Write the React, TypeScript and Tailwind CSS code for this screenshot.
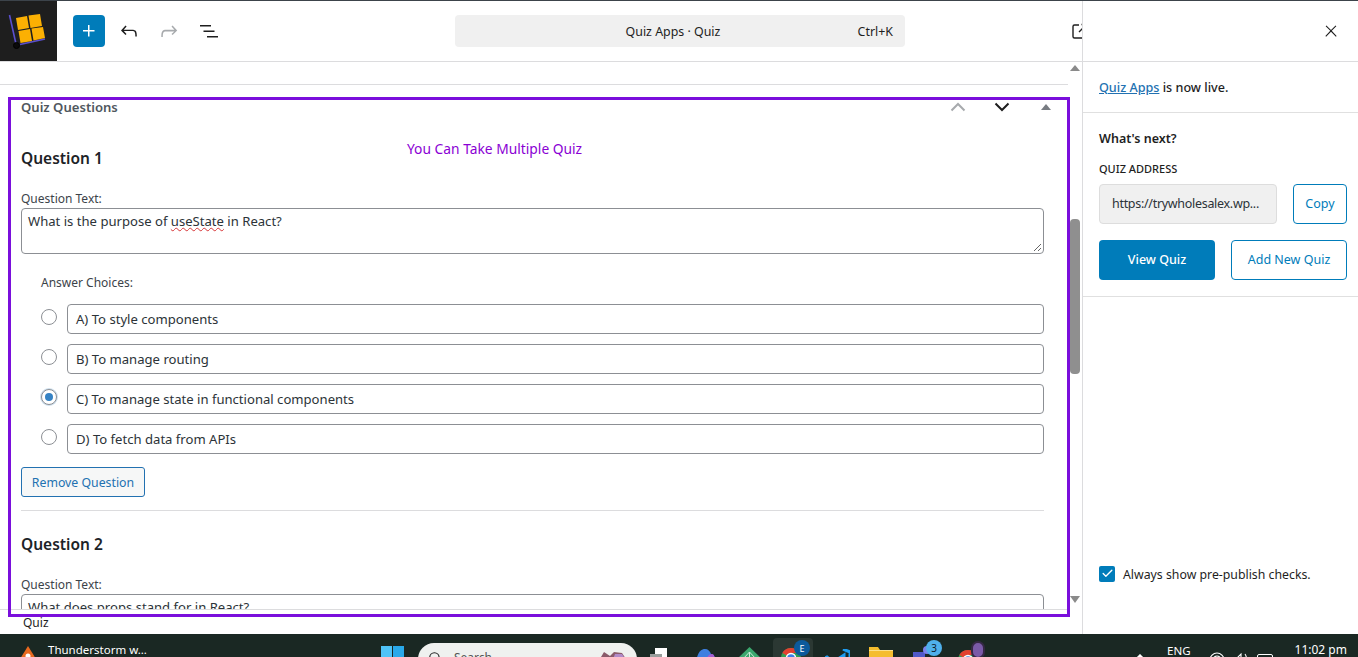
import React from "react";
import { Check, Search } from "lucide-react";

const choices = [
  { label: "A) To style components", checked: false },
  { label: "B) To manage routing", checked: false },
  { label: "C) To manage state in functional components", checked: true },
  { label: "D) To fetch data from APIs", checked: false },
];

const WpIcon = ({ d, className, size = 24 }: { d: string; className?: string; size?: number }) => (
  <svg width={size} height={size} viewBox="0 0 24 24" fill="currentColor" className={className}>
    <path d={d} />
  </svg>
);

const Radio = ({ checked }: { checked: boolean }) => (
  <span
    className={
      checked
        ? "w-4 h-4 rounded-full border border-[#8c8f94] bg-white flex items-center justify-center shrink-0 ring-1 ring-[#cfe0ee]"
        : "w-4 h-4 rounded-full border border-[#8c8f94] bg-white flex items-center justify-center shrink-0"
    }
  >
    {checked && <span className="w-2 h-2 rounded-full bg-[#3582c4]" />}
  </span>
);

const Logo = () => (
  <svg width="57" height="60" viewBox="0 0 57 60">
    <path d="M9.5 14L16 43" stroke="#5a4fcf" strokeWidth="1.6" fill="none" />
    <path d="M20 43.5L45 38" stroke="#5a4fcf" strokeWidth="1.6" fill="none" />
    <circle cx="16.5" cy="44.5" r="3" fill="#0a0a0a" stroke="#000" />
    <path
      d="M16 17l11-2 2 12-11 2z M28.5 14.5L40 13l2 12-11.500 2z M18.500 30L30 28l2 12-11.500 2z M31.500 27.500L43 26l2 11-11.500 2.500z"
      fill="#fbb003"
    />
  </svg>
);

const Chrome = () => (
  <svg width="20" height="20" viewBox="0 0 20 20">
    <circle cx="10" cy="10" r="10" fill="#2f9e52" />
    <path d="M10 0a10 10 0 0 1 8.700 5H10a5 5 0 0 0-4.400 2.600L1.300 5A10 10 0 0 1 10 0z" fill="#e2402f" />
    <circle cx="10" cy="10" r="4.500" fill="#3a7fe8" stroke="#fff" strokeWidth="1.500" />
  </svg>
);

const App: React.FC = () => {
  return (
    <div className="relative w-[1358px] h-[657px] flex flex-col bg-white overflow-hidden text-[13.1px] text-[#2c3338] font-['Noto_Sans',sans-serif]">
      <div className="flex-1 min-h-0 flex border-t border-[#3c434a]">
        <div className="flex-1 min-w-0 flex flex-col">
          {/* top toolbar */}
          <div className="h-[61px] shrink-0 flex items-center border-b border-[#dcdcde]">
            <div className="w-[57px] h-[60px] bg-[#1e1e1e]">
              <Logo />
            </div>
            <button className="ml-4 w-8 h-8 rounded-sm bg-[#007cba] flex items-center justify-center text-white">
              <WpIcon d="M11 12.500V17.500H12.500V12.500H17.500V11H12.500V6H11V11H6V12.500H11Z" />
            </button>
            <WpIcon
              className="ml-3 text-[#1e1e1e]"
              d="M18.300 11.700c-.6-.6-1.400-.9-2.300-.9H6.700l2.900-3.300-1.100-1-4.500 5L8.500 16l1-1-2.700-3H16c.5 0 .9.2 1.300.5 1 1 1 3.400 1 4.500v.5h1.500v-.5c0-1.500 0-4.300-1.500-5.800z"
            />
            <WpIcon
              className="ml-4 text-[#a7aaad]"
              d="M15.600 6.500l-1.100 1 2.900 3.300H8c-.9 0-1.700.3-2.300.9-1.400 1.500-1.400 4.200-1.400 5.800v.5h1.500v-.5c0-1 0-3.500 1-4.500.3-.3.7-.5 1.300-.5h9.200L14.500 15l1.100 1.100 4.600-4.600-4.600-5z"
            />
            <WpIcon
              className="ml-4 text-[#1e1e1e]"
              d="M3 6h11v1.500H3V6zm3.500 5.500h11V13h-11v-1.500zM21 17H10v1.500h11V17z"
            />
            <div className="ml-[234px] w-[450px] h-8 rounded bg-[#f0f0f0] flex items-center relative text-[12.4px] text-[#1e1e1e] pr-[14px] pt-[2px]">
              <span className="w-full text-center">Quiz Apps · Quiz</span>
              <span className="absolute right-[12px]">Ctrl+K</span>
            </div>
            <div className="ml-auto w-[10px] h-[16px] overflow-hidden">
              <svg width="16" height="16" viewBox="0 0 16 16" fill="none" stroke="#1e1e1e" strokeWidth="1.400">
                <path d="M7 2H2.500A1.500 1.500 0 0 0 1 3.500v10A1.500 1.500 0 0 0 2.500 15h9a1.500 1.500 0 0 0 1.500-1.500V9M7 9l7-7M9.500 1.500H15V7" />
              </svg>
            </div>
          </div>
          {/* editor area */}
          <div className="flex-1 min-h-0 flex">
            <div className="flex-1 min-w-0 flex flex-col">
              <div className="h-[23px] shrink-0 border-b border-[#dcdcde]" />
              <div className="flex-1 min-h-0 overflow-hidden relative pl-[21px] pr-[24px]">
                <div className="h-[37px] flex items-start justify-between font-semibold text-[#50575e]">
                  <span className="mt-[13px] leading-[18px]">Quiz Questions</span>
                  <div className="flex -mr-[24px] mt-[17px]">
                    <span className="w-[44px] flex justify-center">
                      <svg width="16" height="10" viewBox="0 0 16 10" fill="none" stroke="#a7aaad" strokeWidth="2">
                        <path d="M1.500 8.500L8 2l6.500 6.500" />
                      </svg>
                    </span>
                    <span className="w-[44px] flex justify-center">
                      <svg width="16" height="10" viewBox="0 0 16 10" fill="none" stroke="#1e1e1e" strokeWidth="2">
                        <path d="M1.500 1.500L8 8l6.500-6.500" />
                      </svg>
                    </span>
                    <span className="w-[44px] flex justify-center pt-[2px]">
                      <span className="w-0 h-0 border-x-[5px] border-x-transparent border-b-[6px] border-b-[#787c82]" />
                    </span>
                  </div>
                </div>
                <div className="h-6" />
                <h3 className="text-[15.5px] leading-6 font-semibold text-[#1d2327]">Question 1</h3>
                <div className="mt-[21px] text-[12px] leading-4 text-[#3c434a]">Question Text:</div>
                <div className="mt-[1px] h-[46px] border border-[#8c8f94] rounded px-[6px] py-[3px] relative">
                  What is the purpose of{" "}
                  <span className="underline decoration-wavy decoration-[#d63638] decoration-1">useState</span> in React?
                  <svg width="9" height="9" viewBox="0 0 9 9" className="absolute right-[1px] bottom-[1px]">
                    <path d="M1 8l7-7M5 8l3-3" stroke="#666" strokeWidth="1" />
                  </svg>
                </div>
                <div className="mt-[21px] ml-5 text-[12px] leading-4 text-[#3c434a]">Answer Choices:</div>
                <div className="mt-[13px] ml-5 flex flex-col gap-[10px]">
                  {choices.map((c) => (
                    <div key={c.label} className="flex items-center gap-[10px]">
                      <div className="-mt-[4px]">
                        <Radio checked={c.checked} />
                      </div>
                      <div className="flex-1 h-[30px] border border-[#8c8f94] rounded px-2 pt-[2px] flex items-center">{c.label}</div>
                    </div>
                  ))}
                </div>
                <button className="mt-[13px] h-[30px] w-[124px] border border-[#2271b1] rounded-[3px] bg-[#f6f7f7] text-[#2271b1] text-[12.3px] pt-[2px] flex items-center justify-center">
                  Remove Question
                </button>
                <div className="mt-[13px] border-t border-[#dcdcde]" />
                <h3 className="mt-[21px] text-[15.5px] leading-6 font-semibold text-[#1d2327]">Question 2</h3>
                <div className="mt-[21px] text-[12px] leading-4 text-[#3c434a]">Question Text:</div>
                <div className="mt-[1px] h-[46px] border border-[#8c8f94] rounded px-[6px] py-[3px]">What does props stand for in React?</div>
                {/* purple annotation */}
                <span className="absolute left-[407px] top-[54px] text-[13.800px] text-[#8a00d4]">You Can Take Multiple Quiz</span>
              </div>
              <div className="h-[25px] shrink-0 border-t border-[#dcdcde] pl-[23px] pt-[2px] flex items-center text-[12px] text-[#1e1e1e]">Quiz</div>
            </div>
            {/* page scrollbar */}
            <div className="w-[14px] shrink-0 flex flex-col items-center">
              <span className="mt-[3px] w-0 h-0 border-x-[5px] border-x-transparent border-b-[6px] border-b-[#8a8a8a]" />
              <span className="mt-[148px] w-[10px] h-[155px] rounded bg-[#8f8f8f]" />
              <span className="mt-[222px] w-0 h-0 border-x-[5px] border-x-transparent border-t-[7px] border-t-[#8a8a8a]" />
            </div>
          </div>
        </div>
        {/* publish sidebar */}
        <aside className="w-[276px] shrink-0 border-l border-[#dcdcde] flex flex-col text-[#1e1e1e]">
          <div className="h-[61px] shrink-0 border-b border-[#dcdcde] flex items-center justify-end pr-[18px]">
            <WpIcon size={18} d="M13 11.800l6.100-6.300-1-1-6.100 6.200-6.100-6.200-1 1 6.100 6.300-6.500 6.700 1 1 6.500-6.600 6.500 6.600 1-1z" />
          </div>
          <div className="h-[51px] shrink-0 border-b border-[#e0e0e0] pl-4 pt-[2px] flex items-center font-medium text-[12.600px]">
            <span>
              <a className="text-[#2271b1] underline">Quiz Apps</a> is now live.
            </span>
          </div>
          <div className="h-[184px] shrink-0 border-b border-[#e0e0e0] px-4 pt-[16px]">
            <div className="font-semibold leading-5 text-[12.500px]">What's next?</div>
            <div className="mt-[12px] text-[11px] leading-4 font-medium">QUIZ ADDRESS</div>
            <div className="mt-[7px] flex justify-between w-[248px]">
              <div className="w-[178px] h-10 rounded-sm border border-[#ddd] bg-[#f0f0f0] flex items-center pl-3 text-[#2c3338] text-[12.500px] tracking-[-0.3px]">
                https://trywholesalex.wp...
              </div>
              <button className="w-[54px] h-10 rounded-sm border border-[#007cba] text-[#007cba] bg-white text-[12.500px]">Copy</button>
            </div>
            <div className="mt-4 flex justify-between w-[248px]">
              <button className="w-[116px] h-10 rounded-sm bg-[#007cba] text-white font-medium text-[12.500px]">View Quiz</button>
              <button className="w-[116px] h-10 rounded-sm border border-[#007cba] text-[#007cba] bg-white text-[12.500px]">Add New Quiz</button>
            </div>
          </div>
          <div className="flex-1 flex items-end pl-4 pb-[50px]">
            <span className="flex items-center gap-2 text-[12.300px]">
              <span className="w-4 h-4 rounded-[2px] bg-[#007cba] flex items-center justify-center text-white">
                <Check size={13} strokeWidth={2.500} />
              </span>
              <span className="pt-[2px]">Always show pre-publish checks.</span>
            </span>
          </div>
        </aside>
      </div>
      {/* windows taskbar, cut off at the bottom like the screenshot */}
      <div className="h-[23px] shrink-0 bg-[#1a2823] flex items-start text-white overflow-hidden pl-5">
        <svg width="16" height="13" viewBox="0 0 16 13" className="mt-3 shrink-0">
          <path d="M8 0L16 13H0z" fill="#e8691f" />
          <circle cx="8" cy="10" r="2.500" fill="#fff" />
        </svg>
        <span className="ml-3 w-[333px] shrink-0 mt-[8px] leading-4 text-[11.500px] whitespace-nowrap">Thunderstorm w...</span>
        <div className="mt-3 w-[23px] h-[23px] grid grid-cols-2 gap-[1px] shrink-0">
          <span className="bg-[#4fc3f7]" />
          <span className="bg-[#29a9ea]" />
        </div>
        <div className="ml-[14px] mt-[9px] w-[219px] h-[32px] shrink-0 rounded-full bg-[#eff1ef] flex items-start pl-[10px] pt-[8px] text-[#555] relative">
          <Search size={14} className="text-[#222]" />
          <span className="ml-3 leading-3 text-[12px] mt-[1px]">Search</span>
          <svg width="34" height="12" viewBox="0 0 34 12" className="absolute left-[178px] top-[7px]">
            <path d="M2 12L8 2l6 4 4-4 8 1 6 9z" fill="#8a5a6a" />
            <path d="M16 12l3-8 7 0 5 8z" fill="#b18ac9" />
          </svg>
        </div>
        <span className="ml-[18px] mt-[14px] w-3 h-3 bg-white shrink-0 relative">
          <span className="absolute -left-[5px] top-[6px] w-3 h-3 bg-[#9a9f9d]" />
        </span>
        <svg width="21" height="12" viewBox="0 0 21 12" className="ml-7 mt-[15px] shrink-0">
          <path d="M1 12C3 3 6 0 10 0c3 0 5 2 6 5 3 0 4 3 4 7z" fill="#3d7fe0" />
          <path d="M11 12c1-5 3-7 6-7 2 0 3 3 3 7z" fill="#a45cd0" />
        </svg>
        <svg width="25" height="12" viewBox="0 0 25 12" className="ml-[21px] mt-[13px] shrink-0">
          <path d="M12.500 0L25 12H0z" fill="#3aa76d" />
          <path d="M12.500 5L6 12M12.500 5L19 12M12.500 5v7" stroke="#cdebd9" strokeWidth="1" />
        </svg>
        <div className="ml-[11px] mt-[4px] w-[40px] h-[30px] rounded bg-[#2b3833] shrink-0 relative pl-2 pt-[10px]">
          <Chrome />
          <span className="absolute left-[21px] top-[2px] w-4 h-4 rounded-full bg-[#0c5a9c] flex items-center justify-center text-[9px] leading-none">E</span>
        </div>
        <svg width="25" height="12" viewBox="0 0 25 12" className="ml-3 mt-[15px] shrink-0">
          <path d="M18 0l7 3v9h-6V6L10 12H7L2 8 0 9v3" fill="none" stroke="#1f9cf0" strokeWidth="3" />
        </svg>
        <svg width="24" height="12" viewBox="0 0 24 12" className="ml-[19px] mt-[13px] shrink-0">
          <path d="M0 0h9l2 3h13v9H0z" fill="#f5bd2e" />
          <path d="M0 3.500h24" stroke="#fce08a" strokeWidth="1" />
        </svg>
        <div className="ml-5 mt-[6px] w-[29px] h-4 shrink-0 relative">
          <span className="absolute left-0 top-3 w-3 h-3 bg-[#5059c9]" />
          <span className="absolute left-[10px] top-[6px] w-[8px] h-[8px] rounded-full bg-[#7b83eb]" />
          <span className="absolute left-[13px] top-0 w-4 h-4 rounded-full bg-[#4fb0ec] flex items-center justify-center text-[10px] leading-none text-[#10202c]">3</span>
        </div>
        <div className="ml-4 mt-[16px] w-[28px] shrink-0 relative">
          <Chrome />
          <span className="absolute left-[13px] -top-[9px] w-[14px] h-[18px] rounded-full bg-[#7a5aa8] border-2 border-[#352845]" />
        </div>
        <svg width="10" height="6" viewBox="0 0 10 6" className="ml-[149px] mt-[20px] shrink-0">
          <path d="M1 5l4-4 4 4" fill="none" stroke="#fff" strokeWidth="1.500" />
        </svg>
        <span className="ml-[22px] mt-[9px] leading-4 text-[11.500px] shrink-0">ENG</span>
        <svg width="16" height="12" viewBox="0 0 16 12" className="ml-[18px] mt-[18px] shrink-0" fill="none" stroke="#fff" strokeWidth="1.200">
          <circle cx="8" cy="8" r="7" />
          <circle cx="8" cy="8" r="4" />
        </svg>
        <svg width="16" height="12" viewBox="0 0 16 12" className="ml-2 mt-[18px] shrink-0" fill="none" stroke="#fff" strokeWidth="1.100">
          <path d="M1 6h3l4-4v10M12 2c1.500 2 2 5 1.500 10" />
        </svg>
        <span className="ml-2 mt-[20px] w-4 h-3 border border-white rounded-[2px] shrink-0" />
        <span className="ml-[22px] mt-[8px] leading-4 text-[12px] whitespace-nowrap shrink-0">11:02 pm</span>
      </div>
      {/* purple annotation frame */}
      <div className="absolute left-[8px] top-[97px] w-[1062px] h-[520px] border-[3px] border-[#7a0fdc] pointer-events-none" />
    </div>
  );
};

export default App;
